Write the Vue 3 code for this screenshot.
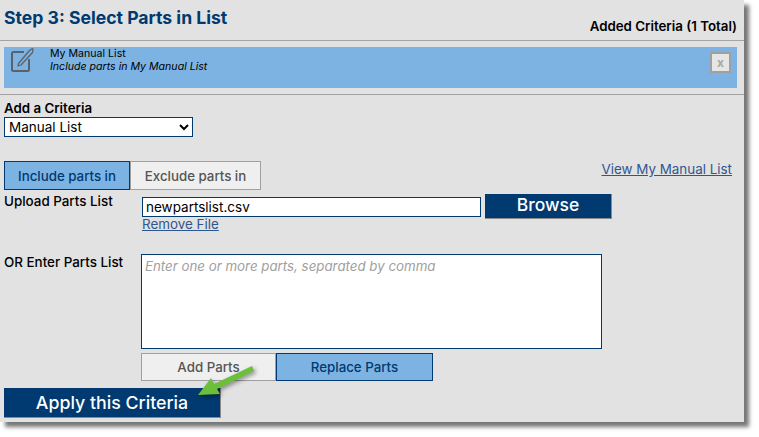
<template>
  <div class="page">
    <div class="panel">
      <header class="header">
        <h1 class="title">Step 3: Select Parts in List</h1>
        <span class="added">Added Criteria (1 Total)</span>
      </header>

      <section class="added-list">
        <div class="criteria-row">
          <svg class="edit-icon" width="24" height="26" viewBox="0 0 24 26" fill="none">
            <path d="M14 5H3.500a1.500 1.500 0 0 0-1.500 1.500V22.500A1.500 1.500 0 0 0 3.500 24H17.500A1.500 1.500 0 0 0 19 22.500V12" stroke="#5d6166" stroke-width="2"/>
            <path d="M8.500 16.500L19.500 3.500L22.500 1.500L23 2.500L22.500 5.500L11 18L8 19Z" stroke="#5d6166" stroke-width="1.300" stroke-linejoin="round"/>
          </svg>
          <div class="criteria-text">
            <div>{{ criteria.name }}</div>
            <em>{{ criteria.description }}</em>
          </div>
          <button class="remove-btn">x</button>
        </div>
      </section>

      <section class="form">
        <label class="add-label">Add a Criteria</label>
        <select class="criteria-select">
          <option>Manual List</option>
        </select>

        <div class="tab-row">
          <div class="tabs">
            <button class="tab active">Include parts in</button>
            <button class="tab">Exclude parts in</button>
          </div>
          <a href="#" class="link" @click.prevent>View My Manual List</a>
        </div>

        <div class="field upload-field">
          <label>Upload Parts List</label>
          <div>
            <div class="upload-row">
              <input class="file-input" type="text" value="newpartslist.csv" />
              <button class="browse-btn">Browse</button>
            </div>
            <a href="#" class="link remove-file" @click.prevent>Remove File</a>
          </div>
        </div>

        <div class="field enter-field">
          <label>OR Enter Parts List</label>
          <div>
            <textarea class="parts-box" placeholder="Enter one or more parts, separated by comma"></textarea>
            <div class="part-buttons">
              <button class="part-btn add">Add Parts</button>
              <button class="part-btn replace">Replace Parts</button>
            </div>
          </div>
        </div>

        <button class="apply-btn">Apply this Criteria</button>
      </section>

      <!-- callout arrow added over the screenshot -->
      <svg class="arrow" width="64" height="44" viewBox="0 0 64 44">
        <path d="M56 6L18 24L15 18L2 35L24 34L21 29L58 11Z" fill="#6cbf3a" />
      </svg>
    </div>
  </div>
</template>

<script setup>
const criteria = {
  name: 'My Manual List',
  description: 'Include parts in My Manual List',
};
</script>

<style>
html, body {
  background: #fff;
}
</style>

<style scoped>
.page {
  height: 437px;
  overflow: hidden;
}

.panel {
  position: relative;
  width: 744px;
  height: 422px;
  box-sizing: border-box;
  background: #e2e2e2;
  color: #000;
  font-family: Inter, "Liberation Sans", sans-serif;
  box-shadow: 5px 5px 4px #777;
}

.header {
  display: flex;
  justify-content: space-between;
  height: 41px;
  box-sizing: border-box;
  padding: 7px 7px 0 4px;
  border-bottom: 1px solid #a3a3a3;
}

.title {
  margin: 0;
  font-size: 17.600px;
  line-height: 22px;
  font-weight: 700;
  color: #003a70;
}

.added {
  margin-top: 11px;
  font-size: 13.300px;
  line-height: 17px;
  font-weight: 600;
}

.added-list {
  height: 54px;
  box-sizing: border-box;
  padding: 6px 7px 0 4px;
  border-bottom: 1px solid #a3a3a3;
}

.criteria-row {
  display: flex;
  height: 41px;
  background: #7db3e3;
}

.edit-icon {
  margin: 0 0 0 6px;
  flex: none;
}

.criteria-text {
  flex: 1;
  margin: 0 0 0 16px;
  font-size: 10.600px;
  line-height: 13px;
}

.remove-btn {
  width: 21px;
  height: 21px;
  margin: 5px 6px 0 0;
  padding: 0;
  border: 2px solid #a0a0a0;
  background: #e6e6e6;
  color: #a8a8a8;
  font: 700 12px/15px Inter, sans-serif;
}

.form {
  display: flex;
  flex-direction: column;
  align-items: flex-start;
  padding: 5px 0 0 4px;
}

.add-label {
  font-size: 13.300px;
  line-height: 17px;
  font-weight: 600;
}

.criteria-select {
  width: 189px;
  height: 20px;
  box-sizing: border-box;
  padding: 0;
  border: 1px solid #003a70;
  border-radius: 0;
  background: #fff;
  color: #000;
  font: 13.500px Inter, sans-serif;
}

.tab-row {
  display: flex;
  justify-content: space-between;
  width: 728px;
  margin-top: 24px;
}

.tabs {
  display: flex;
}

.tab {
  height: 29px;
  padding: 0;
  width: 131px;
  border: 1px solid #a0a0a0;
  background: #efefef;
  color: #555;
  font: 500 13.300px Inter, sans-serif;
}

.tab.active {
  width: 126px;
  border-color: #003a70;
  background: #7db3e3;
  color: #003a70;
}

.link {
  color: #30568f;
  font-size: 13.400px;
  line-height: 16px;
}

.field {
  display: grid;
  grid-template-columns: 138px 1fr;
  width: 100%;
  font-size: 13.400px;
}

.field label {
  font-weight: 500;
  line-height: 16px;
}

.upload-field {
  margin-top: 3px;
}

.upload-row {
  display: flex;
  align-items: center;
  gap: 4px;
  margin-top: 1px;
}

.file-input {
  width: 339px;
  height: 20px;
  box-sizing: border-box;
  padding: 0 3px;
  border: 1px solid #003a70;
  border-radius: 0;
  background: #fff;
  color: #000;
  font: 13.500px Inter, sans-serif;
}

.browse-btn {
  width: 127px;
  height: 25px;
  padding: 0 0 4px;
  border: 1px solid #8a8a8a;
  border-width: 0 1px 1px 0;
  background: #003a70;
  color: #fff;
  font: 500 17.500px Inter, sans-serif;
}

.remove-file {
  display: block;
  margin-top: -3px;
  width: max-content;
}

.enter-field {
  margin-top: 22px;
  grid-template-columns: 137px 1fr;
}

.parts-box {
  display: block;
  width: 461px;
  height: 95px;
  box-sizing: border-box;
  padding: 3px;
  border: 1px solid #003a70;
  border-radius: 0;
  background: #fff;
  resize: none;
  outline: none;
  font: italic 13.300px Inter, sans-serif;
}

.parts-box::placeholder {
  color: #a0a0a0;
  opacity: 1;
}

.part-buttons {
  display: flex;
  margin-top: 4px;
}

.part-btn {
  height: 28px;
  padding: 0;
  font: 500 13.300px Inter, sans-serif;
}

.part-btn.add {
  width: 135px;
  border: 1px solid #a0a0a0;
  background: #efefef;
  color: #555;
}

.part-btn.replace {
  width: 157px;
  border: 1px solid #003a70;
  background: #7db3e3;
  color: #003a70;
}

.apply-btn {
  width: 217px;
  height: 30px;
  margin-top: 7px;
  padding: 0;
  border: 1px solid #8a8a8a;
  border-width: 0 1px 1px 0;
  background: #003a70;
  color: #fff;
  font: 500 17.800px Inter, sans-serif;
}

.arrow {
  position: absolute;
  left: 196px;
  top: 360px;
  filter: drop-shadow(2px 2px 2px rgba(0, 0, 0, 0.4));
}
</style>
